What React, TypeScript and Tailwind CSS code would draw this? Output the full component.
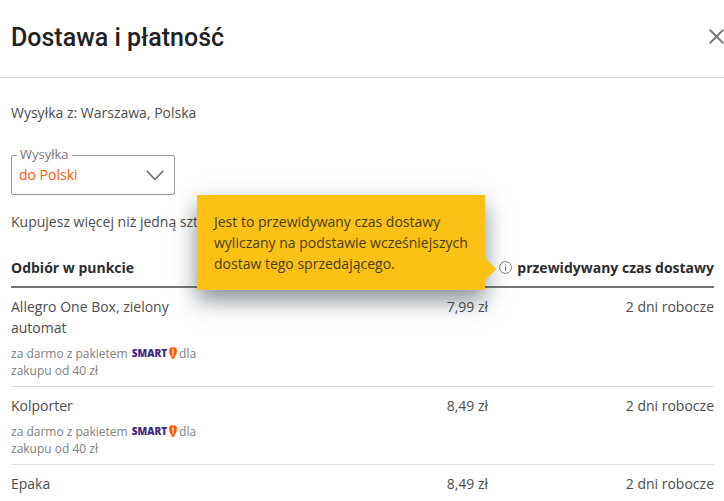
import React from 'react';
import { X } from 'lucide-react';

const rows = [
  { name: 'Allegro One Box, zielony automat', price: '7,99 zł', time: '2 dni robocze', smart: true },
  { name: 'Kolporter', price: '8,49 zł', time: '2 dni robocze', smart: true },
  { name: 'Epaka', price: '8,49 zł', time: '2 dni robocze', smart: false },
];

function SmartBadge() {
  return (
    <span className="inline-flex items-center gap-[2px] ml-[4px] mr-[2px] align-[1px]">
      <span className="font-extrabold text-[10px] leading-[12px] text-[#3f2a80]">SMART</span>
      <svg width="8" height="12" viewBox="0 0 9 12" preserveAspectRatio="none">
        <path d="M0.3 1.5C1.6 0.6 3 0.2 4.5 0.2s2.9 0.4 4.2 1.3v3.4c0 2.4-1.2 3.7-2.4 4.7L6 11.8H3L2.7 9.6C1.5 8.6 0.3 7.3 0.3 4.9z" fill="#ff5a00" />
        <rect x="3.8" y="2.2" width="1.5" height="4.4" fill="#fff" />
        <rect x="3.8" y="7.4" width="1.5" height="1.5" fill="#fff" />
      </svg>
    </span>
  );
}

export default function App() {
  return (
    <div className="relative w-[724px] h-[501px] overflow-hidden bg-white font-['Open_Sans',sans-serif] text-[14px] leading-[21px] text-[#4d4d4d]">
      {/* header */}
      <div className="h-[78px] border-b border-[#dedede] flex items-center justify-between pl-[11px] pb-[2px]">
        <h1 className="font-['Roboto',sans-serif] font-medium text-[25px] leading-[32px] text-[#222222]">Dostawa i płatność</h1>
        <button className="text-[#767676] mr-[-5px] mb-[2px]">
          <X size={25} strokeWidth={1.75} />
        </button>
      </div>

      <div className="px-[11px]">
        <p className="pt-[24px]">Wysyłka z: Warszawa, Polska</p>

        {/* select */}
        <div className="relative mt-[32px] w-[164px] h-[40px] border border-[#9b9b9b] rounded-[2px] flex items-center justify-between pl-[7px] pr-[10px]">
          <span className="absolute left-[5px] top-[-12px] bg-white px-[3px] text-[13px] leading-[20px] text-[#757575]">Wysyłka</span>
          <span className="text-[#ff5a00] mb-[2px]">do Polski</span>
          <svg width="18" height="11" viewBox="0 0 18 11" fill="none" className="text-[#767676]">
            <path d="M0.8 0.8L9 9.5L17.2 0.8" stroke="currentColor" strokeWidth="1.7" />
          </svg>
        </div>

        <p className="mt-[16px] whitespace-nowrap">Kupujesz więcej niż jedną sztukę?</p>

        {/* table */}
        <div className="mt-[25px] w-[703px]">
          <div className="flex items-center justify-between h-[31px] border-b-2 border-[#767676] pb-[8px]">
            <span className="font-bold text-[#2d2d2d]">Odbiór w punkcie</span>
            <span className="flex items-center gap-[5px] font-bold text-[#2d2d2d]">
              <svg width="13" height="13" viewBox="0 0 14 14" fill="none" className="text-[#767676]">
                <circle cx="7" cy="7" r="6.4" stroke="currentColor" strokeWidth="1" />
                <rect x="6.5" y="6" width="1" height="4.5" fill="currentColor" />
                <rect x="6.5" y="3.6" width="1" height="1.2" fill="currentColor" />
              </svg>
              przewidywany czas dostawy
            </span>
          </div>
          {rows.map((row) => (
            <div key={row.name} className="grid grid-cols-[190px_287px_226px] border-b border-[#dedede] pt-[8px] pb-[7px]">
              <div>
                <div>{row.name}</div>
                {row.smart && (
                  <div className="mt-[7px] text-[12px] leading-[17px] text-[#808080]">
                    <div className="whitespace-nowrap h-[17px]">
                      <span>za darmo z pakietem</span>
                      <SmartBadge />
                      <span>dla</span>
                    </div>
                    <div>zakupu od 40 zł</div>
                  </div>
                )}
              </div>
              <div className="text-right">{row.price}</div>
              <div className="text-right">{row.time}</div>
            </div>
          ))}
        </div>
      </div>

      {/* tooltip */}
      <div className="absolute left-[197px] top-[195px] w-[288px] h-[95px] bg-[#fbc114] pl-[17px] pt-[16px] text-[#4a3c10] shadow-[0_10px_22px_rgba(30,45,60,0.55)]">
        Jest to przewidywany czas dostawy wyliczany na podstawie wcześniejszych dostaw tego sprzedającego.
        <span className="absolute left-[280px] top-[66px] w-[16px] h-[16px] rotate-45 bg-[#fbc114]" />
      </div>
    </div>
  );
}
